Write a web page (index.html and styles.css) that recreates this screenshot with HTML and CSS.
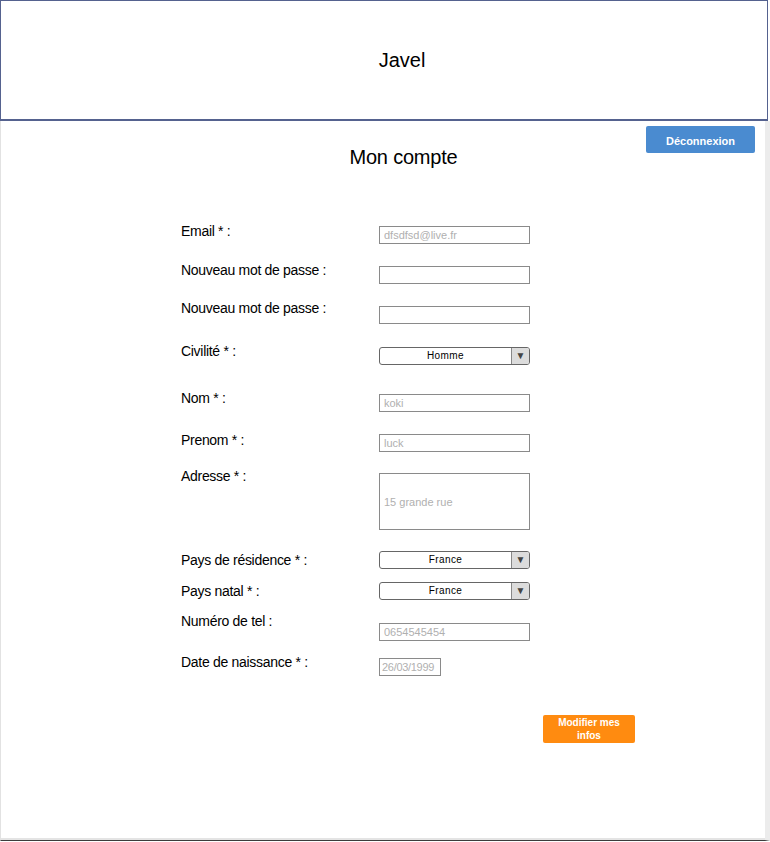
FILE: index.html
```html
<!DOCTYPE html>
<html lang="fr">
<head>
<meta charset="utf-8">
<title>Javel - Mon compte</title>
<link rel="stylesheet" href="styles.css">
</head>
<body>
<header class="site-header">
  <div class="brand">Javel</div>
</header>
<main class="page">
  <div class="top-row">
    <h1 class="title">Mon compte</h1>
    <button class="btn-logout">Déconnexion</button>
  </div>
  <form class="account-form">
    <label class="lbl">Email * :</label>
    <div class="field f-3"><input class="inp" type="text" placeholder="dfsdfsd@live.fr"></div>

    <label class="lbl">Nouveau mot de passe :</label>
    <div class="field f-4"><input class="inp" type="password"></div>

    <label class="lbl">Nouveau mot de passe :</label>
    <div class="field f-6"><input class="inp" type="password"></div>

    <label class="lbl">Civilité * :</label>
    <div class="field f-4"><div class="sel"><span class="sel-val">Homme</span><span class="sel-arrow">▼</span></div></div>

    <label class="lbl">Nom * :</label>
    <div class="field f-4"><input class="inp" type="text" placeholder="koki"></div>

    <label class="lbl">Prenom * :</label>
    <div class="field f-2"><input class="inp" type="text" placeholder="luck"></div>

    <label class="lbl">Adresse * :</label>
    <div class="field f-5"><div class="area">15 grande rue</div></div>

    <label class="lbl l-1">Pays de résidence * :</label>
    <div class="field"><div class="sel"><span class="sel-val">France</span><span class="sel-arrow">▼</span></div></div>

    <label class="lbl l-1">Pays natal * :</label>
    <div class="field"><div class="sel"><span class="sel-val">France</span><span class="sel-arrow">▼</span></div></div>

    <label class="lbl">Numéro de tel :</label>
    <div class="field f-10"><input class="inp" type="text" placeholder="0654545454"></div>

    <label class="lbl">Date de naissance * :</label>
    <div class="field f-4"><input class="inp inp-date" type="text" placeholder="26/03/1999"></div>
  </form>
  <div class="actions">
    <button class="btn-save">Modifier mes<br>infos</button>
  </div>
</main>
</body>
</html>
```
FILE: styles.css
```css
html, body {
  margin: 0;
  padding: 0;
  background: #ffffff;
}
body {
  font-family: "Liberation Sans", Arial, sans-serif;
  color: #000;
  width: 770px;
  height: 842px;
  overflow: hidden;
}
.site-header {
  box-sizing: border-box;
  width: 768px;
  height: 121px;
  border: 1px solid #55628f;
  border-bottom-width: 2px;
  display: flex;
  align-items: center;
  justify-content: center;
  padding-left: 36px;
}
.brand {
  font-size: 20px;
  line-height: 24px;
}
.page {
  box-sizing: border-box;
  width: 770px;
  height: 720px;
  border-left: 1px solid #e2e2e2;
  border-right: 5px solid #ececec;
  border-bottom: 1px solid #3c3c3c;
  box-shadow: inset 0 -2px 0 #e4e4e4;
}
.top-row {
  display: grid;
  grid-template-columns: 1fr 109px;
  column-gap: 0;
  padding-right: 10px;
  height: 48px;
}
.title {
  margin: 24px 0 0 0;
  padding-left: 160px;
  text-align: center;
  font-weight: normal;
  font-size: 20px;
  line-height: 24px;
  letter-spacing: -0.2px;
}
.btn-logout {
  margin-top: 5px;
  height: 27px;
  width: 109px;
  border: none;
  border-radius: 2px;
  background: #4a8bd0;
  color: #fff;
  font-family: "Liberation Sans", Arial, sans-serif;
  font-weight: bold;
  font-size: 11px;
  padding: 2px 0 0 0;
}
.account-form {
  margin-top: 54px;
  padding-left: 180px;
  display: grid;
  grid-template-columns: 198px 151px;
  grid-template-rows: 39px 38px 43px 47px 42px 36px 83px 31px 31px 41px auto;
  align-items: start;
}
.lbl {
  font-size: 14px;
  line-height: 16px;
  letter-spacing: -0.3px;
}
.l-1 { margin-top: 1px; }
.field { margin-top: 0; }
.f-2 { margin-top: 2px; }
.f-3 { margin-top: 3px; }
.f-4 { margin-top: 4px; }
.f-5 { margin-top: 5px; }
.f-6 { margin-top: 6px; }
.f-10 { margin-top: 10px; }
.inp {
  box-sizing: border-box;
  display: block;
  width: 151px;
  height: 18px;
  margin: 0;
  border: 1px solid #8a8a8a;
  border-radius: 0;
  padding: 0 4px;
  font-family: "Liberation Sans", Arial, sans-serif;
  font-size: 11px;
  background: #fff;
}
.inp::placeholder { color: #b0b0b0; }
.inp-date { width: 62px; padding: 0 2px; letter-spacing: -0.3px; }
.area {
  box-sizing: border-box;
  width: 151px;
  height: 57px;
  border: 1px solid #8a8a8a;
  padding: 0 4px;
  display: flex;
  align-items: center;
  font-size: 11px;
  color: #b0b0b0;
}
.sel {
  box-sizing: border-box;
  width: 151px;
  height: 18px;
  border: 1px solid #666;
  border-radius: 3px;
  display: flex;
  overflow: hidden;
  background: #fff;
}
.sel-val {
  flex: 1;
  text-align: center;
  font-size: 10px;
  line-height: 16px;
  letter-spacing: 0.4px;
}
.sel-arrow {
  width: 17px;
  border-left: 1px solid #888;
  background: #dcdcdc;
  color: #444;
  font-size: 10px;
  line-height: 16px;
  text-align: center;
}
.actions {
  margin-top: 39px;
  padding-left: 542px;
}
.btn-save {
  width: 92px;
  height: 28px;
  border: none;
  border-radius: 2px;
  background: #ff8b10;
  color: #fff;
  font-family: "Liberation Sans", Arial, sans-serif;
  font-weight: bold;
  font-size: 10px;
  line-height: 13px;
  padding: 0;
}
```
